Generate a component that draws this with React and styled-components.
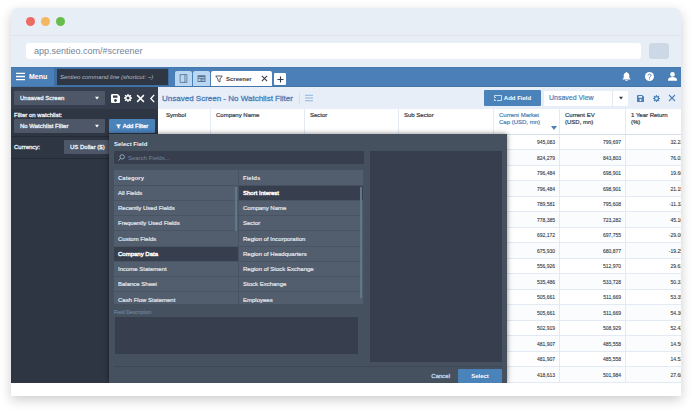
import React from "react";
import styled, { createGlobalStyle, css } from "styled-components";

const GlobalStyle = createGlobalStyle`
  * { box-sizing: border-box; }
  body {
    margin: 0;
    background: #fff;
    font-family: "Liberation Sans", Arial, sans-serif;
    font-size: 6px;
    line-height: 8px;
    color: #333b48;
  }
  button, input, select, textarea { font: inherit; margin: 0; }
  button { cursor: pointer; }
`;

const Page = styled.main`
  padding: 8px 11px 16px;
`;

const BrowserWindow = styled.section`
  border-radius: 6px 6px 1px 1px;
  background: #fff;
  padding-bottom: 13px;
  overflow: hidden;
  box-shadow: 0 4px 12px rgba(0, 0, 0, 0.2);
`;

const TitleBar = styled.div`
  display: flex;
  align-items: center;
  gap: 6px;
  height: 28px;
  padding: 0 15px;
  background: #e8eef6;
  border-bottom: 1px solid #dfe4ec;
`;

const Dot = styled.span`
  width: 9px;
  height: 9px;
  border-radius: 50%;
  background: ${(p) => p.$color};
`;

const AddressBar = styled.div`
  display: flex;
  gap: 8px;
  padding: 7px 12px 8px 15px;
  background: #e8eef6;
`;

const AddressInput = styled.input`
  flex: 1;
  min-width: 0;
  height: 16px;
  padding: 0 8px;
  border: 0;
  border-radius: 3px;
  background: #fff;
  color: #74859c;
  font-size: 9px;
`;

const AddressButton = styled.button`
  width: 20px;
  height: 16px;
  border: 0;
  border-radius: 3px;
  background: #cdd8e6;
`;

const AppBar = styled.header`
  display: flex;
  height: 20px;
  background: #4a7fb7;
  border-top: 1px solid #4578ae;
  border-bottom: 1px solid #4475a8;
  color: #fff;
`;

const MenuButton = styled.button`
  display: flex;
  align-items: center;
  gap: 4px;
  width: 43px;
  padding: 0 0 1px 5px;
  border: 0;
  background: none;
  color: #fff;
  font-size: 7px;
  font-weight: 700;
`;

const CommandArea = styled.div`
  width: 118px;
  padding: 1px 4px 0 3px;
  background: #3f6fa2;
  border-right: 3px solid #4a7fb7;
`;

const CommandInput = styled.input`
  display: block;
  width: 111px;
  height: 16px;
  padding: 0 3px;
  border: 0;
  background: #2f3745;
  font-style: italic;
  color: #fff;
  &::placeholder { color: #b5bbc5; opacity: 1; }
`;

const TabStrip = styled.nav`
  display: flex;
  align-items: flex-end;
  gap: 1px;
  flex: 1;
  padding-left: 3px;
`;

const Tab = styled.button`
  display: flex;
  align-items: center;
  justify-content: center;
  width: 17px;
  height: 15px;
  padding: 0;
  border: 0;
  border-radius: 2px 2px 0 0;
  background: #b9d6f2;
  color: #587491;
`;

const ActiveTab = styled.div`
  display: flex;
  align-items: center;
  gap: 3px;
  width: 61px;
  height: 15px;
  padding: 0 4px;
  border-radius: 2px 2px 0 0;
  background: #fff;
  color: #333b48;
  font-weight: 700;
`;

const IconButton = styled.button`
  display: flex;
  align-items: center;
  justify-content: center;
  width: ${(p) => p.$size || 12}px;
  height: 12px;
  padding: 0;
  border: 0;
  background: none;
  color: inherit;
`;

const TabClose = styled(IconButton)`
  width: 8px;
  margin-left: auto;
`;

const NewTab = styled(IconButton)`
  width: 12px;
  margin: 0 0 1px 1px;
  border-radius: 1px;
  background: #fff;
  color: #333b48;
`;

const UserTools = styled.div`
  display: flex;
  align-items: center;
  gap: 11px;
  padding: 0 3px 2px 0;
`;

const Workspace = styled.div`
  position: relative;
  display: flex;
  overflow: hidden;
`;

const Sidebar = styled.aside`
  flex: 0 0 147px;
  background: #2f3643;
  color: #eef1f5;
  -webkit-text-stroke: 0.3px;
`;

const SidebarTools = styled.div`
  display: flex;
  align-items: center;
  gap: 4px;
  height: 22px;
  padding: 0 0 0 3px;
  background: #353e4d;
  color: #fff;
`;

const SidebarIcons = styled.div`
  display: flex;
  flex: 1;
  justify-content: space-between;
  margin-right: -1px;
`;

const FilterGroup = styled.div`
  padding: 2px 3px 3px;
  border-bottom: 1px solid #252b36;
`;

const Label = styled.label`
  display: block;
  line-height: 8px;
`;

const FilterRow = styled.div`
  display: flex;
  gap: 4px;
`;

const CurrencyRow = styled.div`
  display: flex;
  align-items: center;
  justify-content: space-between;
  height: 22px;
  padding: 0 3px 1px;
  border-bottom: 1px solid #252b36;
`;

const SelectWrap = styled.div`
  position: relative;
  width: ${(p) => p.$width}px;
`;

const Select = styled.select`
  appearance: none;
  display: block;
  width: 100%;
  height: 14px;
  padding: 0 12px 0 6px;
  border: 0;
  border-radius: 1px;
  background: #4d5767;
  color: #eef1f5;
  ${(p) => p.$light && css`
    height: 15px;
    padding-left: 5px;
    background: #fff;
    color: #4a7fb7;
    font-size: 7px;
    -webkit-text-stroke: 0.2px;
  `}
`;

const SelectArrow = styled.span`
  position: absolute;
  top: 0;
  bottom: 0;
  right: 0;
  display: flex;
  align-items: center;
  justify-content: center;
  width: 16px;
  color: #fff;
  pointer-events: none;
  ${(p) => p.$light && css`
    color: #333b48;
    border-left: 1px solid #e4e9f1;
  `}
`;

const PrimaryButton = styled.button`
  display: flex;
  align-items: center;
  justify-content: center;
  gap: 2px;
  width: ${(p) => p.$width}px;
  height: ${(p) => p.$height || 14}px;
  padding: 0;
  border: 0;
  border-radius: 1px;
  background: #4a82ba;
  color: #fff;
  font-weight: ${(p) => (p.$bold ? 700 : 400)};
`;

const Content = styled.section`
  flex: 1;
  min-width: 0;
  overflow: hidden;
`;

const ContentBar = styled.div`
  display: flex;
  align-items: center;
  height: 22px;
  padding: 0 3px 0 4px;
  background: #e8eef7;
  color: #4a7fb7;
`;

const Heading = styled.h1`
  margin: 0;
  padding-right: 6px;
  border-right: 1px solid #d5deea;
  font-size: 8px;
  line-height: 11px;
  font-weight: 400;
  -webkit-text-stroke: 0.3px;
`;

const ListButton = styled(IconButton)`
  margin-left: 3px;
  color: #8db4dc;
`;

const ViewTools = styled.div`
  display: flex;
  align-items: center;
  gap: 3px;
  margin-left: auto;
`;

const ViewIcons = styled.div`
  display: flex;
  gap: 4px;
  padding-left: 3px;
`;

const DataTable = styled.table`
  table-layout: fixed;
  width: 534px;
  border-collapse: separate;
  border-spacing: 0;
  background: #fff;
`;

const HeadCell = styled.th`
  position: relative;
  width: ${(p) => p.$width}px;
  height: 26px;
  padding: 3px 4px 0 5px;
  border-right: 1px solid #e3eaf3;
  border-bottom: 1px solid #d5dde8;
  text-align: left;
  vertical-align: top;
  font-weight: 400;
  line-height: 7px;
  white-space: pre-line;
  -webkit-text-stroke: 0.2px;
  color: ${(p) => (p.$active ? "#4a7fb7" : "#333b48")};
  &:first-child { padding-left: 8px; }
`;

const SortMark = styled.span`
  position: absolute;
  right: 2px;
  bottom: 4px;
  border: 3px solid transparent;
  border-top: 4px solid #4a7fb7;
  border-bottom: 0;
`;

const Row = styled.tr`
  height: 15px;
  &:nth-child(even) {
    height: 16px;
    background: #fafcfe;
  }
`;

const Cell = styled.td`
  padding: 0 4px;
  border-right: 1px solid #e3eaf3;
  border-bottom: 1px solid #e3eaf3;
  text-align: right;
  font-size: 5px;
  line-height: 6px;
  -webkit-text-stroke: 0.1px;
  &:last-child { padding-right: 8px; }
`;

const Dialog = styled.div`
  position: absolute;
  z-index: 1;
  top: 47px;
  bottom: 0;
  left: 98px;
  display: flex;
  flex-direction: column;
  width: 398px;
  padding: 5px 5px 0;
  background: #465160;
  color: #eef1f5;
  box-shadow: 0 0 5px rgba(0, 0, 0, 0.5);
`;

const DialogTitle = styled.h2`
  margin: 0;
  font-size: 6px;
  line-height: 10px;
`;

const DialogBody = styled.div`
  display: flex;
  gap: 6px;
  margin-top: 2px;
  padding-bottom: 4px;
  border-bottom: 1px solid #3d4755;
`;

const Picker = styled.div`
  flex: 1;
`;

const SearchBox = styled.label`
  display: flex;
  align-items: center;
  gap: 3px;
  height: 13px;
  padding: 0 4px;
  background: #373f4f;
  color: #9dc0dc;
`;

const SearchInput = styled.input`
  flex: 1;
  padding: 0;
  border: 0;
  outline: 0;
  background: none;
  color: #fff;
  &::placeholder { color: #7b8492; opacity: 1; }
`;

const Lists = styled.div`
  display: grid;
  grid-template-columns: 1fr 1fr;
  height: 134px;
  margin-top: 6px;
  overflow: hidden;
  background: #525d6e;
`;

const ListColumn = styled.div`
  position: relative;
  border-right: 1px solid #485362;
`;

const ListHeading = styled.h3`
  margin: 0;
  height: 16px;
  padding: 0 4px;
  border-bottom: 1px solid #465160;
  font-size: 6px;
  line-height: 16px;
`;

const Option = styled.button`
  display: block;
  width: 100%;
  height: 15px;
  padding: 0 4px;
  border: 0;
  border-bottom: 1px solid #495463;
  background: ${(p) => (p.$selected ? "#373f4f" : "transparent")};
  color: ${(p) => (p.$selected ? "#fff" : "#e3e7ed")};
  text-align: left;
  -webkit-text-stroke: ${(p) => (p.$selected ? "0.4px" : "0.2px")};
  &:nth-of-type(4n) { height: 16px; }
`;

const ScrollThumb = styled.span`
  position: absolute;
  top: 17px;
  right: 1px;
  width: 2px;
  height: ${(p) => p.$length}px;
  background: #627889;
`;

const DescriptionLabel = styled.label`
  display: block;
  margin-top: 4px;
  color: #7b91ad;
  font-size: 5px;
  line-height: 9px;
`;

const Description = styled.textarea`
  display: block;
  width: calc(100% - 7px);
  height: 37px;
  margin-left: 1px;
  border: 0;
  resize: none;
  background: #373f4f;
  color: #fff;
`;

const Preview = styled.div`
  width: 132px;
  height: 211px;
  background: #373f4f;
`;

const DialogFooter = styled.div`
  display: flex;
  justify-content: flex-end;
  gap: 8px;
  margin-top: auto;
`;

const CancelButton = styled.button`
  padding: 0;
  border: 0;
  background: none;
  color: #b9d6f2;
  -webkit-text-stroke: 0.3px;
`;

const Svg = ({ size = 9, box = 16, children }) => (
  <svg width={size} height={size} viewBox={`0 0 ${box} ${box}`} fill="currentColor" aria-hidden="true">
    {children}
  </svg>
);
const stroke = { fill: "none", stroke: "currentColor" };

const LinesIcon = ({ size, width = 2.4 }) => (
  <Svg size={size}><path d="M0 2.5h16M0 8h16M0 13.5h16" {...stroke} strokeWidth={width} /></Svg>
);
const CloseIcon = ({ size = 8, width = 2.6 }) => (
  <Svg size={size}><path d="M2 2l12 12M14 2L2 14" {...stroke} strokeWidth={width} /></Svg>
);
const SaveIcon = ({ size }) => (
  <Svg size={size}>
    <path fillRule="evenodd" d="M2 0h10l4 4v10a2 2 0 0 1-2 2H2a2 2 0 0 1-2-2V2a2 2 0 0 1 2-2zm1.500 2.500v4h8v-4zM8 9a2.500 2.500 0 1 0 0 5 2.500 2.500 0 0 0 0-5z" />
  </Svg>
);
const GearIcon = ({ size }) => (
  <Svg size={size}>
    <circle cx="8" cy="8" r="4.500" {...stroke} strokeWidth="3" />
    <path d="M8 0v3M8 13v3M0 8h3M13 8h3M2.300 2.300l2.200 2.200M11.500 11.500l2.200 2.200M13.700 2.300l-2.200 2.200M4.500 11.500l-2.200 2.200" {...stroke} strokeWidth="2.600" />
  </Svg>
);
const ChevronIcon = () => (
  <Svg size={9}><path d="M11 1.500L5 8l6 6.500" {...stroke} strokeWidth="2.400" /></Svg>
);
const FunnelIcon = ({ size, outline }) => (
  <Svg size={size}>
    <path d="M1.500 2h13L10 8v6l-4-2.500V8z" fill={outline ? "none" : "currentColor"} stroke="currentColor" strokeWidth="1.600" />
  </Svg>
);
const PanelIcon = () => (
  <Svg size={9}><path d="M2 1h12v14H2zM10.500 1v14" {...stroke} strokeWidth="1.500" /></Svg>
);
const NewsIcon = () => (
  <Svg size={9}>
    <path fillRule="evenodd" d="M1 2h14v12H1zm1.500 3.500v1h11v-1zm0 3v4h4v-4zm6 0v1.200h5V8.500zm0 2.800v1.200h5v-1.200z" />
  </Svg>
);
const PlusIcon = () => (
  <Svg size={7}><path d="M8 1v14M1 8h14" {...stroke} strokeWidth="2.600" /></Svg>
);
const BellIcon = () => (
  <Svg size={9}><path d="M8 0c1 0 1.500.7 1.500 1.500C12 2.200 13 4.300 13 7v3.500l2 2V13.500H1v-1l2-2V7c0-2.700 1-4.800 3.500-5.500C6.500.7 7 0 8 0zM6 14.300h4a2 1.700 0 0 1-4 0z" /></Svg>
);
const HelpIcon = () => (
  <Svg size={9}>
    <circle cx="8" cy="8" r="8" />
    <path d="M5.500 6.300C5.500 3 10.700 3 10.700 6.200c0 2-2.700 1.900-2.700 4M8 11.500v1.800" fill="none" stroke="#4a7fb7" strokeWidth="1.700" />
  </Svg>
);
const UserIcon = () => (
  <Svg size={9}><circle cx="8" cy="4.300" r="4.100" /><path d="M0 15.500v-2c0-3 4-4.500 8-4.500s8 1.500 8 4.500v2z" /></Svg>
);
const SearchIcon = () => (
  <Svg size={7}><path d="M6 10l-5 5M14.500 6.500a5 5 0 1 1-10 0 5 5 0 0 1 10 0z" {...stroke} strokeWidth="1.800" /></Svg>
);
const FieldIcon = () => (
  <Svg size={8}><path d="M1 7V3h14v10H6M1 10v3h3M1 7h3" {...stroke} strokeWidth="1.400" /></Svg>
);
const DownIcon = () => <Svg size={4}><path d="M0 3h16L8 14z" /></Svg>;

function Dropdown({ id, label, value, width, light }) {
  return (
    <SelectWrap $width={width}>
      <Select id={id} aria-label={label} defaultValue={value} $light={light}>
        <option>{value}</option>
      </Select>
      <SelectArrow $light={light}><DownIcon /></SelectArrow>
    </SelectWrap>
  );
}

function OptionList({ heading, items, selected, thumb }) {
  return (
    <ListColumn>
      <ListHeading>{heading}</ListHeading>
      {items.map((item) => (
        <Option key={item} type="button" $selected={item === selected} aria-pressed={item === selected}>
          {item}
        </Option>
      ))}
      <ScrollThumb $length={thumb} />
    </ListColumn>
  );
}

const columns = [
  { label: "Symbol", width: 53 },
  { label: "Company Name", width: 94 },
  { label: "Sector", width: 94 },
  { label: "Sub Sector", width: 95 },
  { label: "Current Market\nCap (USD, mn)", width: 66, active: true },
  { label: "Current EV\n(USD, mn)", width: 66 },
  { label: "1 Year Return\n(%)", width: 66 },
];

const rows = [
  ["945,083", "799,697", "32.23"],
  ["824,279", "843,803", "76.01"],
  ["796,484", "698,901", "19.66"],
  ["796,484", "698,901", "21.19"],
  ["789,581", "795,608", "-11.32"],
  ["778,385", "723,282", "45.16"],
  ["692,172", "697,755", "-29.06"],
  ["675,930", "680,877", "-19.25"],
  ["556,926", "512,970", "29.61"],
  ["535,486", "533,728", "50.31"],
  ["505,661", "511,669", "53.35"],
  ["505,661", "511,669", "54.36"],
  ["502,919", "508,929", "52.42"],
  ["481,907", "485,558", "14.56"],
  ["481,907", "485,558", "14.53"],
  ["418,613", "501,984", "27.68"],
];

const categories = [
  "All Fields", "Recently Used Fields", "Frequently Used Fields", "Custom Fields",
  "Company Data", "Income Statement", "Balance Sheet", "Cash Flow Statement",
];

const fields = [
  "Short Interest", "Company Name", "Sector", "Region of Incorporation",
  "Region of Headquarters", "Region of Stock Exchange", "Stock Exchange", "Employees",
];

export default function App() {
  return (
    <Page>
      <GlobalStyle />
      <BrowserWindow>
        <TitleBar>
          <Dot $color="#ed6b63" />
          <Dot $color="#f4b661" />
          <Dot $color="#66bd49" />
        </TitleBar>
        <AddressBar>
          <AddressInput aria-label="Address" defaultValue="app.sentieo.com/#screener" />
          <AddressButton aria-label="Go" />
        </AddressBar>
        <AppBar>
          <MenuButton><LinesIcon size={9} />Menu</MenuButton>
          <CommandArea>
            <CommandInput aria-label="Command line" placeholder="Sentieo command line (shortcut: ~)" />
          </CommandArea>
          <TabStrip>
            <Tab aria-label="Notebook"><PanelIcon /></Tab>
            <Tab aria-label="News"><NewsIcon /></Tab>
            <ActiveTab>
              <FunnelIcon size={8} outline />
              Screener
              <TabClose aria-label="Close tab"><CloseIcon size={7} width={2.4} /></TabClose>
            </ActiveTab>
            <NewTab aria-label="New tab"><PlusIcon /></NewTab>
          </TabStrip>
          <UserTools>
            <IconButton aria-label="Notifications"><BellIcon /></IconButton>
            <IconButton aria-label="Help"><HelpIcon /></IconButton>
            <IconButton aria-label="Account"><UserIcon /></IconButton>
          </UserTools>
        </AppBar>
        <Workspace>
          <Sidebar>
            <SidebarTools>
              <Dropdown label="Screen" value="Unsaved Screen" width={91} />
              <SidebarIcons>
                <IconButton aria-label="Save screen"><SaveIcon size={9} /></IconButton>
                <IconButton aria-label="Screen settings"><GearIcon size={8} /></IconButton>
                <IconButton aria-label="Close screen"><CloseIcon size={9} /></IconButton>
                <IconButton aria-label="Collapse"><ChevronIcon /></IconButton>
              </SidebarIcons>
            </SidebarTools>
            <FilterGroup>
              <Label htmlFor="watchlist">Filter on watchlist:</Label>
              <FilterRow>
                <Dropdown id="watchlist" value="No Watchlist Filter" width={91} />
                <PrimaryButton $width={46}><FunnelIcon size={5} />Add Filter</PrimaryButton>
              </FilterRow>
            </FilterGroup>
            <CurrencyRow>
              <Label htmlFor="currency">Currency:</Label>
              <Dropdown id="currency" value="US Dollar ($)" width={91} />
            </CurrencyRow>
          </Sidebar>
          <Content>
            <ContentBar>
              <Heading>Unsaved Screen - No Watchlist Filter</Heading>
              <ListButton aria-label="List"><LinesIcon size={8} /></ListButton>
              <ViewTools>
                <PrimaryButton $width={57} $height={16} $bold><FieldIcon />Add Field</PrimaryButton>
                <Dropdown label="View" value="Unsaved View" width={84} light />
                <ViewIcons>
                  <IconButton aria-label="Save view"><SaveIcon size={7} /></IconButton>
                  <IconButton aria-label="View settings"><GearIcon size={7} /></IconButton>
                  <IconButton aria-label="Close view"><CloseIcon size={8} width={2.2} /></IconButton>
                </ViewIcons>
              </ViewTools>
            </ContentBar>
            <DataTable>
              <thead>
                <tr>
                  {columns.map((c) => (
                    <HeadCell key={c.label} $width={c.width} $active={c.active}>
                      {c.label}
                      {c.active && <SortMark />}
                    </HeadCell>
                  ))}
                </tr>
              </thead>
              <tbody>
                {rows.map((values, i) => (
                  <Row key={i}>
                    <Cell /><Cell /><Cell /><Cell />
                    {values.map((value, j) => <Cell key={j}>{value}</Cell>)}
                  </Row>
                ))}
              </tbody>
            </DataTable>
          </Content>
          <Dialog role="dialog" aria-labelledby="dialog-title">
            <DialogTitle id="dialog-title">Select Field</DialogTitle>
            <DialogBody>
              <Picker>
                <SearchBox>
                  <SearchIcon />
                  <SearchInput aria-label="Search fields" placeholder="Search Fields..." />
                </SearchBox>
                <Lists>
                  <OptionList heading="Category" items={categories} selected="Company Data" thumb={44} />
                  <OptionList heading="Fields" items={fields} selected="Short Interest" thumb={111} />
                </Lists>
                <DescriptionLabel htmlFor="description">Field Description</DescriptionLabel>
                <Description id="description" readOnly />
              </Picker>
              <Preview />
            </DialogBody>
            <DialogFooter>
              <CancelButton>Cancel</CancelButton>
              <PrimaryButton $width={44} $bold>Select</PrimaryButton>
            </DialogFooter>
          </Dialog>
        </Workspace>
      </BrowserWindow>
    </Page>
  );
}
